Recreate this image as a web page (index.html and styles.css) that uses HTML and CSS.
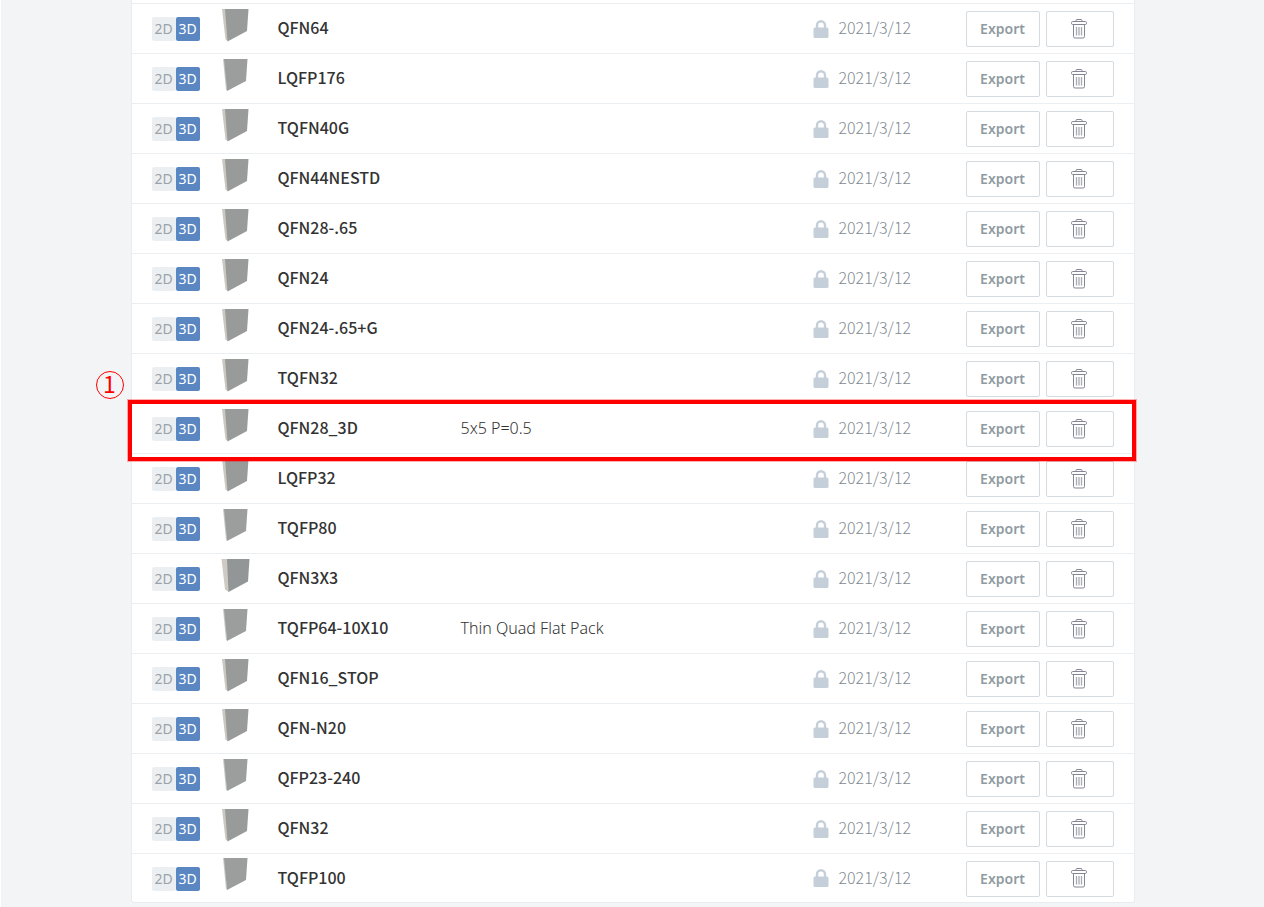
FILE: index.html
```
<!DOCTYPE html>
<html lang="en">
<head>
  <meta charset="UTF-8" />
  <meta name="viewport" content="width=device-width, initial-scale=1" />
  <title>Packages</title>
  <link rel="stylesheet" href="styles.css">
</head>
<body>

  <!-- Shared icons -->
  <svg class="sprite" aria-hidden="true">
    <symbol id="icon-lock" viewBox="0 0 16 18">
      <path d="M4 8V5.2a4 4 0 0 1 8 0V8" fill="none" stroke="currentColor" stroke-width="2.4"/>
      <rect x="0.5" y="7.5" width="15" height="10.5" rx="1.5" fill="currentColor"/>
    </symbol>
    <symbol id="icon-trash" viewBox="0 0 16 20">
      <g fill="none" stroke="currentColor">
        <path d="M5 2.500V1.500a1 1 0 0 1 1-1h4a1 1 0 0 1 1 1v1"/>
        <rect x="0.5" y="2.500" width="15" height="3" rx="1.2"/>
        <path d="M2.5 5.500v12a1.500 1.500 0 0 0 1.500 1.500h8a1.500 1.500 0 0 0 1.500-1.500v-12"/>
        <path d="M5.500 8v8.500M8 8v8.500M10.500 8v8.500" stroke-width="1.300" opacity="0.700"/>
      </g>
    </symbol>
    <symbol id="thumb-flat" viewBox="0 0 30 34">
      <path d="M2 0H4L6 31.500L5 31z" fill="#c9c8c5"/>
      <path d="M3 0H26.500L25 22L6 32z" fill="#9c9e9e"/>
    </symbol>
    <symbol id="thumb-mid" viewBox="0 0 30 34">
      <path d="M1 0H5L7 32L4.500 30.500z" fill="#cbc7c1"/>
      <path d="M4 0H27.500L26 22L6.500 32.500z" fill="#999b9b"/>
    </symbol>
    <symbol id="thumb-thick" viewBox="0 0 30 34">
      <path d="M0.500 0H7L8 33L4 30.500z" fill="#cfcbc4"/>
      <path d="M6 0H28.500L27 22.500L7.500 33z" fill="#939696"/>
    </symbol>
  </svg>

  <main class="panel">
    <table class="packages" aria-label="Packages">
      <tbody id="package-rows"></tbody>
    </table>
  </main>

  <script>
    const packages = [
      { name: 'QFN64', thumb: 'mid' },
      { name: 'LQFP176', thumb: 'flat' },
      { name: 'TQFN40G', thumb: 'mid' },
      { name: 'QFN44NESTD', thumb: 'mid' },
      { name: 'QFN28-.65', thumb: 'mid' },
      { name: 'QFN24', thumb: 'mid' },
      { name: 'QFN24-.65+G', thumb: 'mid' },
      { name: 'TQFN32', thumb: 'mid' },
      { name: 'QFN28_3D', thumb: 'mid', description: '5x5 P=0.5', callout: 1 },
      { name: 'LQFP32', thumb: 'mid' },
      { name: 'TQFP80', thumb: 'flat' },
      { name: 'QFN3X3', thumb: 'thick' },
      { name: 'TQFP64-10X10', thumb: 'flat', description: 'Thin Quad Flat Pack' },
      { name: 'QFN16_STOP', thumb: 'mid' },
      { name: 'QFN-N20', thumb: 'mid' },
      { name: 'QFP23-240', thumb: 'flat' },
      { name: 'QFN32', thumb: 'mid' },
      { name: 'TQFP100', thumb: 'flat' }
    ];

    function packageRow(item) {
      const callout = item.callout
        ? `<div class="callout"><span class="callout-number">${item.callout}</span></div>`
        : '';
      return `
        <tr>
          <td class="col-type"><div class="badges"><span class="badge">2D</span><span class="badge active">3D</span></div></td>
          <td class="col-thumb"><svg class="thumb" aria-hidden="true"><use href="#thumb-${item.thumb}"/></svg></td>
          <td class="col-name">${item.name}</td>
          <td class="col-description">${item.description || ''}</td>
          <td class="col-date"><div class="date"><svg class="lock" aria-hidden="true"><use href="#icon-lock"/></svg><time datetime="2021-03-12">2021/3/12</time></div></td>
          <td class="col-actions">
            <div class="actions">
              <button type="button" class="btn btn-export">Export</button>
              <button type="button" class="btn btn-delete" aria-label="Delete ${item.name}"><svg class="trash" aria-hidden="true"><use href="#icon-trash"/></svg></button>
            </div>
            ${callout}
          </td>
        </tr>`;
    }

    document.getElementById('package-rows').innerHTML = packages.map(packageRow).join('');
  </script>

</body>
</html>
```
FILE: styles.css
```
:root {
  --page-bg: #f3f4f6;
  --line-color: #eceff1;
  --button-border: #d3dae0;
  --text-color: #333333;
  --muted-color: #7f8b93;
  --accent-color: #5a87c2;
  --callout-color: #ff0000;
  --font-main: "Noto Sans CJK JP", "Noto Sans", sans-serif;
  --font-ui: "Noto Sans", sans-serif;
}

* {
  box-sizing: border-box;
}

body {
  margin: 0;
  border-left: 1px solid #ffffff;
  min-height: 100vh;
  background: var(--page-bg);
  color: var(--text-color);
  font-family: var(--font-main);
  font-size: 16px;
  line-height: 24px;
}

.sprite {
  position: absolute;
  width: 0;
  height: 0;
}

.panel {
  max-width: 1004px;
  margin: 0 auto;
  padding-top: 3px;
  background: #ffffff;
  border: 1px solid #e8edf2;
  border-top: 0;
  border-radius: 0 0 3px 3px;
}

.packages {
  width: 100%;
  table-layout: fixed;
  border-collapse: separate;
  border-spacing: 0;
}

.packages tr {
  position: relative;
}

.packages td {
  height: 50px;
  padding: 0;
  border-top: 1px solid var(--line-color);
  vertical-align: middle;
}

.packages tr:last-child td {
  height: 49px;
}

.packages .col-type {
  width: 90px;
  padding-left: 20px;
}

.col-thumb {
  width: 56px;
}

.packages .col-name {
  width: 183px;
  padding-bottom: 3px;
  font-weight: 500;
}

.packages .col-description {
  padding-bottom: 2px;
  font-family: var(--font-ui);
  font-weight: 300;
}

.col-date {
  width: 153px;
}

.packages .col-actions {
  width: 168px;
  padding-right: 20px;
}

.badges {
  display: flex;
  padding-top: 1px;
}

.badge {
  width: 24px;
  height: 24px;
  border-radius: 2px;
  background: #eceff2;
  color: #9aa3a9;
  font-family: var(--font-ui);
  font-size: 14px;
  text-align: center;
}

.badge.active {
  background: var(--accent-color);
  color: #ffffff;
}

.thumb {
  display: block;
  width: 30px;
  height: 34px;
  margin: 0 0 6px -1px;
}

.date {
  display: flex;
  align-items: center;
  gap: 10px;
  color: var(--muted-color);
  font-weight: 300;
}

.date time {
  padding-bottom: 3px;
}

.lock {
  width: 16px;
  height: 18px;
  color: #c5cfda;
}

.actions {
  display: flex;
  gap: 6px;
  padding-top: 1px;
}

.btn {
  display: flex;
  align-items: center;
  justify-content: center;
  height: 36px;
  padding: 0 0 1px;
  border: 1px solid var(--button-border);
  border-radius: 2px;
  background: #ffffff;
  color: #8f9ba1;
  font-family: var(--font-ui);
  font-size: 14px;
  font-weight: 600;
  cursor: pointer;
}

.btn:hover {
  background: var(--page-bg);
}

.btn-export {
  width: 74px;
}

.btn-delete {
  width: 68px;
  padding-right: 2px;
}

.trash {
  width: 16px;
  height: 20px;
  color: #858594;
}

/* Red frame drawn over the row it points out */
.callout {
  position: absolute;
  z-index: 1;
  top: -3px;
  right: -2px;
  bottom: -8px;
  left: -4px;
  border: 4px solid var(--callout-color);
  box-shadow: 0 0 0 1px rgba(255, 0, 0, 0.3);
  pointer-events: none;
}

.callout-number {
  position: absolute;
  top: -33px;
  left: -36px;
  width: 28px;
  height: 28px;
  border: 1px solid var(--callout-color);
  border-radius: 50%;
  color: var(--callout-color);
  font-size: 23px;
  line-height: 22px;
  text-align: center;
}
```
